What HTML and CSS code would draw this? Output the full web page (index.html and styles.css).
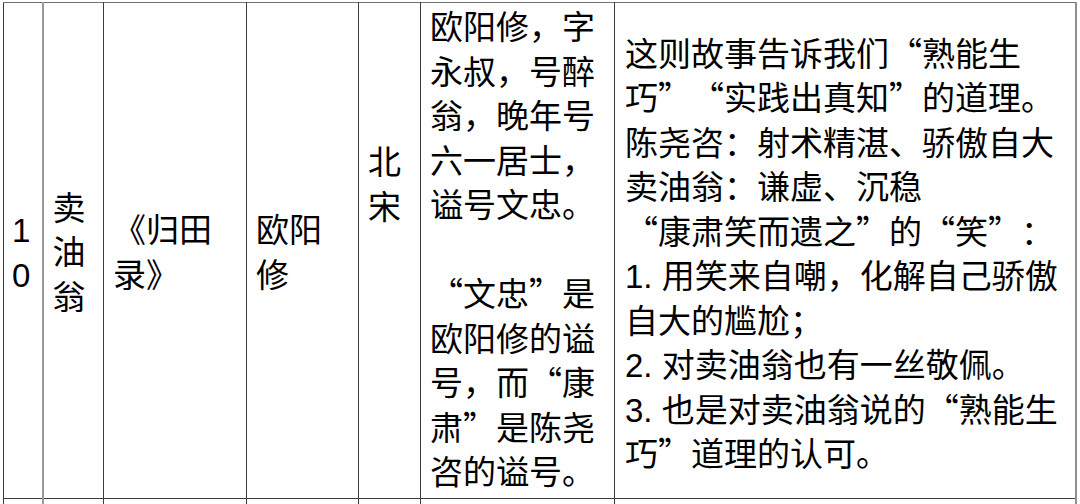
FILE: index.html
```html
<!DOCTYPE html>
<html lang="zh-CN">
<head>
<meta charset="utf-8">
<title>卖油翁</title>
<link rel="stylesheet" href="styles.css">
</head>
<body>
<table class="sheet">
  <colgroup>
    <col class="c-no">
    <col class="c-title">
    <col class="c-source">
    <col class="c-author">
    <col class="c-era">
    <col class="c-note">
    <col class="c-theme">
  </colgroup>
  <tbody>
    <tr class="entry">
      <td class="no"><span class="num">10</span></td>
      <td class="mid">卖油翁</td>
      <td class="mid">《归田录》</td>
      <td class="mid">欧阳修</td>
      <td class="era">北宋</td>
      <td class="note">欧阳修，字永叔，号醉翁，晚年号六一居士，谥号文忠。<br><br>“文忠”是欧阳修的谥号，而“康肃”是陈尧咨的谥号。</td>
      <td class="theme">这则故事告诉我们“熟能生巧”“实践出真知”的道理。<br>陈尧咨：射术精湛、骄傲自大<br>卖油翁：谦虚、沉稳<br>“康肃笑而遗之”的“笑”：<br><span class="num">1. </span>用笑来自嘲，化解自己骄傲自大的尴尬；<br><span class="num">2. </span>对卖油翁也有一丝敬佩。<br><span class="num">3. </span>也是对卖油翁说的“熟能生巧”道理的认可。</td>
    </tr>
    <tr class="next">
      <td class="no"></td><td></td><td></td><td></td><td></td><td></td><td class="theme"></td>
    </tr>
  </tbody>
</table>
</body>
</html>
```

FILE: styles.css
```css
html, body {
  margin: 0;
  padding: 0;
  background: #ffffff;
  overflow: hidden;
}

body {
  font-family: "Noto Sans CJK SC", "Noto Sans", sans-serif;
  color: #000000;
}

.sheet {
  margin: 2px 0 0 3px;
  width: 1072px;
  table-layout: fixed;
  border-collapse: collapse;
  font-size: 33px;
  line-height: 44.5px;
  text-spacing-trim: space-all;
}

.c-no { width: 39px; }
.c-title { width: 61px; }
.c-source { width: 143px; }
.c-author { width: 112px; }
.c-era { width: 62px; }
.c-note { width: 194px; }
.c-theme { width: 461px; }

.sheet td {
  border: 1px solid #3c3c3c;
  padding: 0 9px;
  vertical-align: middle;
  overflow: hidden;
}

.entry {
  height: 496px;
}

.entry td {
  border-top-color: #707070;
}

.next {
  height: 5px;
}

.next td {
  padding: 0;
  border-bottom: 0;
}

.sheet td.no {
  padding: 0 6px 0 8px;
  word-break: break-all;
  border-right: 2px solid #999999;
}

.next td.no {
  padding: 0;
}

.num {
  font-family: "Liberation Sans", Arial, sans-serif;
  line-height: 1;
}

.sheet td.era {
  vertical-align: top;
  padding-top: 135px;
}

.sheet td.note {
  vertical-align: top;
  padding-top: 0;
}

.sheet td.theme {
  padding: 3px 10px 0;
  border-right: 2px solid #8f8f8f;
}

.next td.theme {
  padding: 0;
}
```
